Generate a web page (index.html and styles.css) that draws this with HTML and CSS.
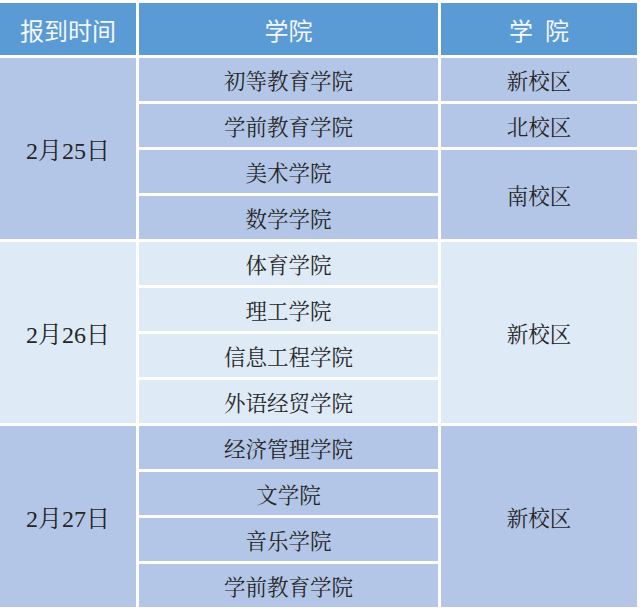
FILE: index.html
```html
<!DOCTYPE html>
<html lang="zh">
<head>
<meta charset="utf-8">
<link rel="stylesheet" href="styles.css">
</head>
<body>
<div class="table">
  <div class="cell head">报到时间</div>
  <div class="cell head">学院</div>
  <div class="cell head">学<span class="gap"></span>院</div>

  <div class="cell date dark g1">2月25日</div>
  <div class="cell dark">初等教育学院</div>
  <div class="cell dark">新校区</div>
  <div class="cell dark">学前教育学院</div>
  <div class="cell dark">北校区</div>
  <div class="cell dark">美术学院</div>
  <div class="cell dark span2">南校区</div>
  <div class="cell dark">数学学院</div>

  <div class="cell date light g2">2月26日</div>
  <div class="cell light">体育学院</div>
  <div class="cell light span4">新校区</div>
  <div class="cell light">理工学院</div>
  <div class="cell light">信息工程学院</div>
  <div class="cell light">外语经贸学院</div>

  <div class="cell date dark g3">2月27日</div>
  <div class="cell dark">经济管理学院</div>
  <div class="cell dark span4">新校区</div>
  <div class="cell dark">文学院</div>
  <div class="cell dark">音乐学院</div>
  <div class="cell dark">学前教育学院</div>
</div>
</body>
</html>
```

FILE: styles.css
```css
html, body {
  margin: 0;
  padding: 0;
  background: #ffffff;
}

.table {
  display: grid;
  grid-template-columns: 136px 299px 196px;
  grid-template-rows: 52px repeat(12, 43px);
  column-gap: 3px;
  row-gap: 3px;
  padding-top: 3px;
  width: 637px;
  font-family: "Noto Serif CJK SC", "Liberation Serif", "Noto Sans CJK SC", serif;
  font-size: 21.5px;
  color: #262626;
}

.cell {
  display: flex;
  align-items: center;
  justify-content: center;
  white-space: nowrap;
}

.head {
  background: #5b9bd5;
  color: #f4f7fb;
  font-family: "Noto Sans CJK SC", sans-serif;
  font-size: 24px;
}

.gap {
  display: inline-block;
  width: 12px;
}

.dark { background: #b4c6e7; }
.light { background: #deeaf6; }

.date {
  grid-column: 1;
  font-family: "Liberation Serif", "Noto Serif CJK SC", "Noto Sans CJK SC", serif;
  font-size: 24px;
}

.g1 { grid-row: 2 / span 4; }
.g2 { grid-row: 6 / span 4; }
.g3 { grid-row: 10 / span 4; }

.span2 { grid-row: span 2; }
.span4 { grid-row: span 4; }
```
